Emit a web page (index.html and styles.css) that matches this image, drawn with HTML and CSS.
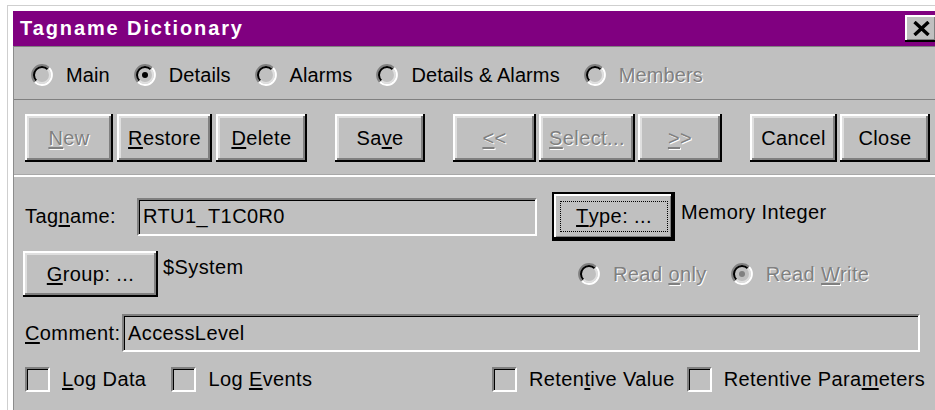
FILE: index.html
```html
<!DOCTYPE html>
<html lang="en">
<head>
<meta charset="utf-8">
<title>Tagname Dictionary</title>
<link rel="stylesheet" href="styles.css">
</head>
<body>
<svg class="defs" width="0" height="0" aria-hidden="true">
  <defs>
    <symbol id="radio" viewBox="0 0 22 22">
      <path d="M3.93 18.07A10 10 0 0 1 18.07 3.93" fill="none" stroke="#808080" stroke-width="2"/>
      <path d="M18.07 3.93A10 10 0 0 1 3.93 18.07" fill="none" stroke="#ffffff" stroke-width="2"/>
      <path d="M5.34 16.66A8 8 0 0 1 16.66 5.34" fill="none" stroke="#000000" stroke-width="2"/>
      <path d="M16.66 5.34A8 8 0 0 1 5.34 16.66" fill="none" stroke="#dfdfdf" stroke-width="2"/>
    </symbol>
  </defs>
</svg>

<div class="window">
  <div class="titlebar">
    <span class="title">Tagname Dictionary</span>
    <div class="close">
      <svg width="17" height="15" viewBox="0 0 17 15"><path d="M1.5 1 L15.5 14 M15.5 1 L1.5 14" stroke="#000" stroke-width="3.4"/></svg>
    </div>
  </div>

  <div class="panel">
    <div class="views">
      <div class="opt"><svg class="radio"><use href="#radio"/></svg><span>Main</span></div>
      <div class="opt"><svg class="radio"><use href="#radio"/><circle cx="11" cy="11" r="3" fill="#000"/></svg><span>Details</span></div>
      <div class="opt"><svg class="radio"><use href="#radio"/></svg><span>Alarms</span></div>
      <div class="opt"><svg class="radio"><use href="#radio"/></svg><span>Details &amp; Alarms</span></div>
      <div class="opt"><svg class="radio"><use href="#radio"/></svg><span class="dis">Members</span></div>
    </div>

    <div class="toolbar">
      <div class="group">
        <button class="btn w-new"><span class="dis"><u>N</u>ew</span></button>
        <button class="btn w-restore"><u>R</u>estore</button>
        <button class="btn w-delete"><u>D</u>elete</button>
      </div>
      <div class="group">
        <button class="btn w-save">Sa<u>v</u>e</button>
      </div>
      <div class="group tight">
        <button class="btn w-prev"><span class="dis"><u>&lt;</u>&lt;</span></button>
        <button class="btn w-select"><span class="dis"><u>S</u>elect...</span></button>
        <button class="btn w-next"><span class="dis"><u>&gt;</u>&gt;</span></button>
      </div>
      <div class="group tight">
        <button class="btn w-cancel">Cancel</button>
        <button class="btn w-close">Close</button>
      </div>
    </div>

    <div class="fields">
      <div class="row row-tag">
        <span class="lbl lbl-tag">Tag<u>n</u>ame:</span>
        <div class="field field-tag">RTU1_T1C0R0</div>
        <button class="btn btn-default"><span class="focus"><u>T</u>ype: ...</span></button>
        <span class="value">Memory Integer</span>
      </div>

      <div class="row row-group">
        <button class="btn w-group"><u>G</u>roup: ...</button>
        <span class="sysname">$System</span>
        <div class="access">
          <div class="opt"><svg class="radio"><use href="#radio"/></svg><span class="dis">Read <u>o</u>nly</span></div>
          <div class="opt"><svg class="radio"><use href="#radio"/><circle cx="11" cy="11" r="3" fill="#808080"/></svg><span class="dis">Read <u>W</u>rite</span></div>
        </div>
      </div>

      <div class="row row-comment">
        <span class="lbl lbl-comment"><u>C</u>omment:</span>
        <div class="field field-comment">AccessLevel</div>
      </div>

      <div class="row row-checks">
        <div class="checks checks-left">
          <div class="chk"><span class="box"></span><span><u>L</u>og Data</span></div>
          <div class="chk"><span class="box"></span><span>Log <u>E</u>vents</span></div>
        </div>
        <div class="checks checks-right">
          <div class="chk"><span class="box"></span><span>Reten<u>t</u>ive Value</span></div>
          <div class="chk"><span class="box"></span><span>Retentive Para<u>m</u>eters</span></div>
        </div>
      </div>
    </div>
  </div>
</div>
</body>
</html>
```

FILE: styles.css
```css
* {
  box-sizing: border-box;
}

html, body {
  margin: 0;
  height: 100%;
  overflow: hidden;
  background: #ffffff;
}

body {
  font-family: "Liberation Sans", Arial, sans-serif;
  font-size: 20px;
  letter-spacing: 0.4px;
  color: #000;
}

.defs {
  position: absolute;
  width: 0;
  height: 0;
}

u {
  text-decoration: underline;
  text-underline-offset: 2px;
}

/* window frame */
.window {
  margin: 5px 0 0 7px;
  border-top: 1px solid #cfcfcf;
  border-left: 1px solid #cfcfcf;
  padding: 5px 0 0 5px;
  height: 420px;
  overflow: hidden;
}

.titlebar {
  height: 35px;
  background: #800080;
  color: #fff;
  display: flex;
  align-items: center;
  justify-content: space-between;
  padding-left: 7px;
}

.title {
  font-weight: bold;
  letter-spacing: 1.9px;
  font-size: 20px;
}

.close {
  width: 32px;
  height: 27px;
  margin-right: -2px;
  background: #c0c0c0;
  display: flex;
  align-items: center;
  justify-content: center;
  box-shadow: inset -2px -2px 0 #000, inset 2px 2px 0 #fff, inset -3px -3px 0 #808080;
}

/* dialog body */
.panel {
  background: #c0c0c0;
  border-top: 1px solid #808080;
  border-left: 1px solid #8c8c8c;
  height: 380px;
}

.views {
  display: flex;
  align-items: center;
  gap: 24px;
  height: 26px;
  margin-top: 15px;
  padding-left: 17px;
  letter-spacing: 0.1px;
}

.opt {
  display: flex;
  align-items: center;
  gap: 13px;
  white-space: nowrap;
}

.radio {
  width: 22px;
  height: 22px;
  flex: none;
}

.dis {
  color: #808080;
  text-shadow: 1px 1px 0 #ffffff;
}

/* command buttons */
.toolbar {
  margin-top: 11px;
  border-top: 1px solid #808080;
  border-bottom: 2px solid #ffffff;
  box-shadow: inset 0 -1px 0 #a8a8a8;
  padding: 14px 0 13px 11px;
  display: flex;
  gap: 28px;
}

.group {
  display: flex;
  gap: 4px;
}

.group.tight {
  gap: 3px;
}

.btn {
  appearance: none;
  border: none;
  margin: 0;
  padding: 0;
  height: 48px;
  font: inherit;
  letter-spacing: inherit;
  color: #000;
  background: #c0c0c0;
  display: flex;
  align-items: center;
  justify-content: center;
  box-shadow: inset -2px -2px 0 #000, inset 2px 2px 0 #fff, inset -4px -4px 0 #808080, inset 4px 4px 0 #dfdfdf;
  white-space: nowrap;
}

.w-new { width: 88px; }
.w-restore { width: 95px; }
.w-delete { width: 91px; }
.w-save { width: 90px; }
.w-prev { width: 83px; }
.w-select { width: 96px; }
.w-next { width: 84px; }
.w-cancel { width: 87px; }
.w-close { width: 90px; }

/* form fields */
.fields {
  padding: 15px 15px 0 11px;
}

.row {
  display: flex;
  align-items: center;
}

.row-tag {
  height: 49px;
}

.lbl {
  white-space: nowrap;
}

.lbl-tag {
  width: 112px;
}

.field {
  height: 38px;
  border-style: solid;
  border-width: 2px;
  border-color: #808080 #ffffff #ffffff #808080;
  box-shadow: inset 1px 1px 0 #000;
  background: #c0c0c0;
  padding-left: 4px;
  display: flex;
  align-items: center;
  white-space: nowrap;
}

.field-tag {
  width: 400px;
}

.btn-default {
  width: 123px;
  height: 49px;
  margin-left: 15px;
  box-shadow: inset 0 0 0 2px #000, inset -4px -4px 0 #000, inset 4px 4px 0 #fff, inset -5px -5px 0 #808080;
  align-items: stretch;
  justify-content: stretch;
}

.focus {
  flex: 1;
  margin: 9px 7px 9px 8px;
  border: 1px dotted #000;
  display: flex;
  align-items: center;
  justify-content: center;
}

.value {
  align-self: flex-start;
  margin: 9px 0 0 6px;
  white-space: nowrap;
}

.row-group {
  height: 46px;
  margin-top: 10px;
}

.w-group {
  width: 135px;
  height: 46px;
  margin-left: -2px;
}

.sysname {
  align-self: flex-start;
  width: 410px;
  margin: 5px 0 0 5px;
}

.access {
  display: flex;
  align-items: center;
  gap: 24px;
  margin-left: 5px;
}

.row-comment {
  height: 38px;
  margin-top: 17px;
}

.lbl-comment {
  width: 97px;
}

.field-comment {
  flex: 1;
}

.row-checks {
  height: 25px;
  margin-top: 15px;
}

.checks {
  display: flex;
  align-items: center;
  flex: none;
}

.checks-left {
  width: 467px;
  gap: 25px;
}

.checks-right {
  gap: 12px;
}

.chk {
  display: flex;
  align-items: center;
  gap: 12px;
  white-space: nowrap;
}

.box {
  width: 25px;
  height: 25px;
  flex: none;
  border-style: solid;
  border-width: 2px;
  border-color: #808080 #ffffff #ffffff #808080;
  box-shadow: inset 1px 1px 0 #000;
  background: #c0c0c0;
}
```
